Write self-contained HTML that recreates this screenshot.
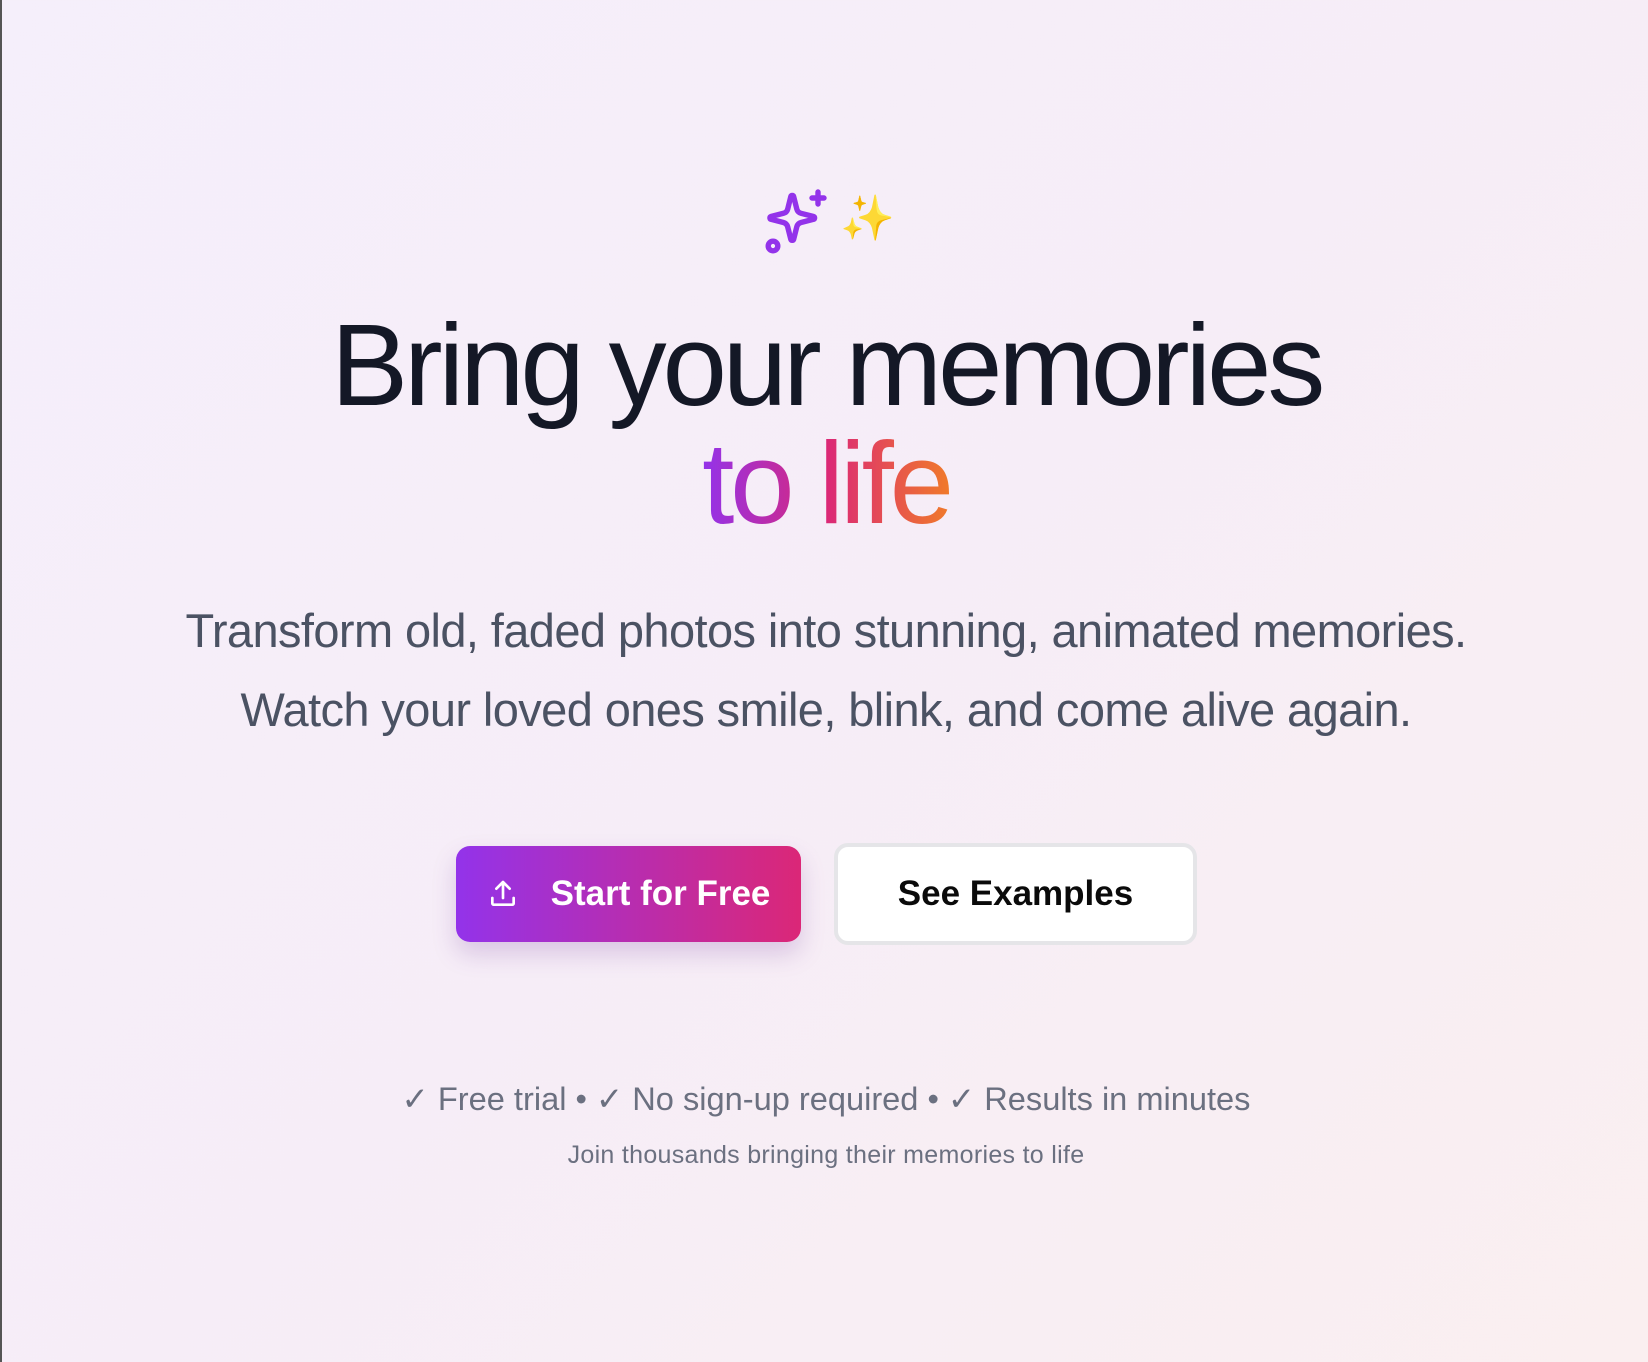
<!DOCTYPE html>
<html><head><meta charset="utf-8"><style>
*{margin:0;padding:0;box-sizing:border-box}
html,body{width:1648px;height:1362px;overflow:hidden}
body{font-family:"Liberation Sans",sans-serif;background:linear-gradient(135deg,#f5effb 0%,#f6edf7 50%,#faeff0 100%);position:relative;border-left:2px solid #555}
.c{position:absolute;left:0;width:1648px;text-align:center;white-space:nowrap}
h1{font-weight:500;font-size:116px;color:#141826;letter-spacing:-4.2px;line-height:118px}
.g{background:linear-gradient(90deg,#9333ea,#db2777 50%,#f07a2a);-webkit-background-clip:text;background-clip:text;color:transparent}
.sub{font-size:47px;color:#4b5263;line-height:79px;letter-spacing:-0.6px}
.btn{position:absolute;border-radius:14px;font-size:35px;font-weight:700;display:flex;align-items:center;justify-content:center}
</style></head><body>
<svg style="position:absolute;left:758px;top:186px" width="74" height="72" viewBox="0 0 24 24" fill="none" stroke="#9333ea" stroke-width="1.8" stroke-linecap="round" stroke-linejoin="round"><path d="M9.94 3.5a.5.5 0 0 1 .94 0l1.06 4.2a2 2 0 0 0 1.4 1.4l4.2 1.06a.5.5 0 0 1 0 .94l-4.2 1.06a2 2 0 0 0-1.4 1.4l-1.06 4.2a.5.5 0 0 1-.94 0l-1.06-4.2a2 2 0 0 0-1.4-1.4L3.3 11.1a.5.5 0 0 1 0-.94l4.2-1.06a2 2 0 0 0 1.4-1.4z"/><path d="M19 2v4M17 4h4"/><circle cx="4" cy="20" r="1.6"/></svg>
<div class="c" style="left:838px;width:54px;top:192px;font-size:44px;text-align:left;color:#f5c542">✨</div>
<h1 class="c" style="top:306px">Bring your memories</h1>
<h1 class="c" style="top:424px"><span class="g">to life</span></h1>
<div class="c sub" style="top:591px">Transform old, faded photos into stunning, animated memories.<br>Watch your loved ones smile, blink, and come alive again.</div>
<div class="btn" style="left:454px;top:846px;width:345px;height:96px;background:linear-gradient(90deg,#9333ea,#db2777);color:#fff;box-shadow:0 12px 24px rgba(120,60,160,.22)">
<svg width="32" height="32" viewBox="0 0 24 24" fill="none" stroke="#fff" stroke-width="2" stroke-linecap="round" stroke-linejoin="round" style="margin-right:32px"><path d="M4 15v4a1 1 0 0 0 1 1h14a1 1 0 0 0 1-1v-4M12 3v12M7 8l5-5 5 5"/></svg>Start for Free</div>
<div class="btn" style="left:832px;top:843px;width:363px;height:102px;background:#fff;border:4px solid #e5e5e8;color:#0a0a0a">See Examples</div>
<div class="c" style="top:1080px;font-size:32.6px;color:#6b7080">✓ Free trial • ✓ No sign-up required • ✓ Results in minutes</div>
<div class="c" style="top:1141px;font-size:25px;color:#6b7080;letter-spacing:.3px">Join thousands bringing their memories to life</div>
</body></html>
